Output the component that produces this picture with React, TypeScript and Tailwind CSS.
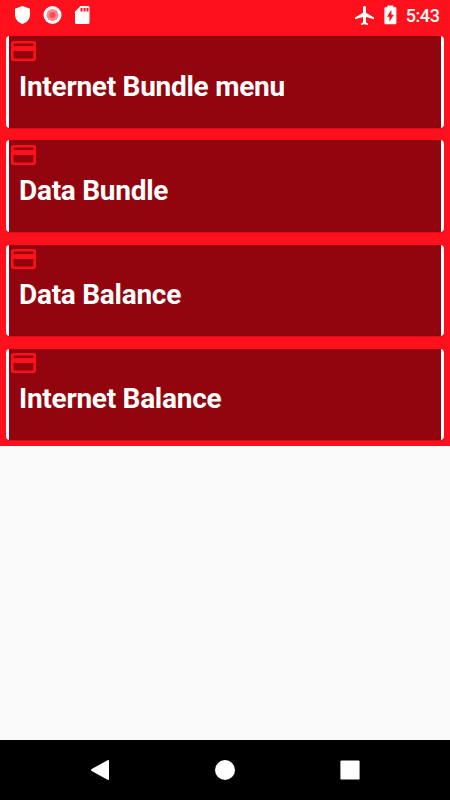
const menuItems = ["Internet Bundle menu", "Data Bundle", "Data Balance", "Internet Balance"];

function CardIcon() {
    return (
        <svg viewBox="0.4 0 24 24" className="w-[30px] h-[30px] -mt-[0.5px] shrink-0 fill-[#ff101c]">
            <path d="M20 4H4c-1.11 0-1.99.89-1.99 2L2 18c0 1.11.89 2 2 2h16c1.11 0 2-.89 2-2V6c0-1.11-.89-2-2-2zm0 14H4v-6h16v6zm0-10H4V6h16v2z" />
        </svg>
    );
}

function StatusBar() {
    return (
        <div className="h-[30px] flex items-center justify-between pl-[13px] pr-[10.5px] text-white">
            <div className="flex items-center gap-[10px]">
                <svg viewBox="0 0 20 20" className="w-5 h-5 fill-white">
                    <path d="M9.5 1 17 3.8v6.1c0 4-3 7.3-7.5 9.1C5 17.2 2 13.9 2 9.9V3.8z" />
                </svg>
                <svg viewBox="0 0 20 20" className="w-5 h-5">
                    <circle cx="9.5" cy="10" r="9" fill="#fff" />
                    <circle cx="9.5" cy="10" r="6" fill="#ff878e" />
                    <circle cx="9.5" cy="10" r="3" fill="#ff4a54" />
                </svg>
                <svg viewBox="0 0 20 20" className="w-5 h-5 fill-white">
                    <path d="M7.5 1H15q1.5 0 1.5 1.5v15Q16.5 19 15 19H3.5Q2 19 2 17.5V6.5zM7.5 3v3.5h2V3zm3 0v3.5h2V3zm3 0v3.5h2V3z" fillRule="evenodd" />
                </svg>
            </div>
            <div className="flex items-center">
                <svg viewBox="0 0 24 24" preserveAspectRatio="none" className="w-6 h-[23px] mr-[2px] fill-white">
                    <path d="M21 16v-2l-8-5V3.5c0-.83-.67-1.5-1.5-1.5S10 2.67 10 3.5V9l-8 5v2l8-2.5V19l-2 1.5V22l3.5-1 3.5 1v-1.5L13 19v-5.5l8 2.5z" />
                </svg>
                <svg viewBox="0.6 0.5 24 24" preserveAspectRatio="none" className="w-6 h-[22.5px] mr-[3px] fill-white">
                    <path d="M16.7 4H15V2H9v2H7.3C6.6 4 6 4.6 6 5.33v15.34C6 21.4 6.6 22 7.33 22h9.34c.73 0 1.33-.6 1.33-1.33V5.33C18 4.6 17.4 4 16.7 4zM11 19.5V14H8.5L13 6.5V12h2.5L11 19.5z" />
                </svg>
                <span className="text-[18px] leading-none font-medium tracking-[-0.4px] relative top-[0.5px]">5:43</span>
            </div>
        </div>
    );
}

function NavBar() {
    return (
        <div className="h-[60px] bg-black flex items-center justify-between px-[90px]">
            <svg viewBox="0 0 20 20" className="w-5 h-5 fill-white">
                <path d="M17.5.3c.9-.5 1.5-.2 1.5.8v17.8c0 1-.6 1.3-1.5.8L1.7 10.9c-.9-.5-.9-1.3 0-1.8z" />
            </svg>
            <div className="w-5 h-5 rounded-full bg-white" />
            <svg viewBox="0 0 20 20" className="w-5 h-5 fill-white">
                <rect x="0.4" y="0.4" width="19.2" height="19.2" rx="1.2" />
            </svg>
        </div>
    );
}

export default function App() {
    return (
        <div className="w-[450px] h-[800px] flex flex-col bg-[#fafafa] overflow-hidden font-['Roboto',sans-serif]">
            <div className="h-[446px] bg-[#ff101c]">
                <StatusBar />
                <div className="flex flex-col gap-[12.9px] px-[6px] pt-[6.3px]">
                    {menuItems.map((item) => (
                        <div
                            key={item}
                            className="h-[91.3px] rounded-[4px] bg-white px-[3px] overflow-hidden shadow-[0_1px_1px_rgba(0,0,0,0.15)]"
                        >
                            <div className="h-full bg-[#92040e] flex flex-col">
                                <CardIcon />
                                <span className="ml-[10px] mt-[3.8px] text-[28px] leading-[33px] font-bold tracking-[-0.27px] text-white whitespace-nowrap">
                                    {item}
                                </span>
                            </div>
                        </div>
                    ))}
                </div>
            </div>
            <div className="flex-1" />
            <NavBar />
        </div>
    );
}
